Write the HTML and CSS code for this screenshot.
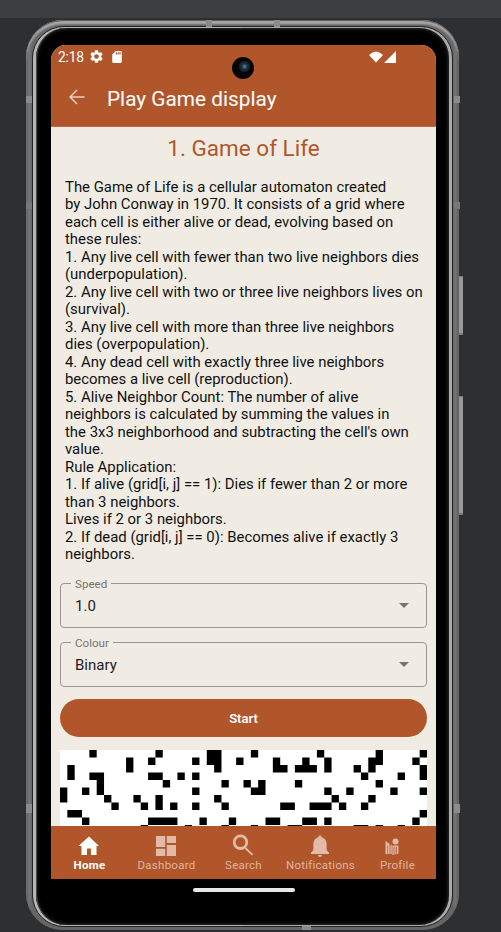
FILE: index.html
```html
<!DOCTYPE html>
<html lang="en">
<head>
<meta charset="utf-8">
<title>Play Game display</title>
<link rel="stylesheet" href="styles.css">
</head>
<body>
<div class="toolbar"></div>
<div class="stage">
  <i class="key key-power"></i><i class="key key-volume"></i>
  <div class="phone">
    <i class="antenna a1"></i><i class="antenna a2"></i><i class="antenna a3"></i><i class="antenna a4"></i>
    <i class="antenna a5"></i><i class="antenna a6"></i><i class="antenna a7"></i>
    <i class="antenna a8"></i><i class="antenna a9"></i>
    <div class="rim"><div class="bezel">
      <div class="screen">
        <header class="header">
          <div class="status">
            <span class="clock">2:18</span>
            <svg class="gear" viewBox="2 2 20 20"><path fill="#fff" d="M19.14 12.94c.04-.3.06-.61.06-.94s-.02-.64-.07-.94l2.03-1.58c.18-.14.23-.41.12-.61l-1.92-3.32c-.12-.22-.37-.29-.59-.22l-2.39.96c-.5-.38-1.03-.7-1.62-.94l-.36-2.54c-.04-.24-.24-.41-.48-.41h-3.84c-.24 0-.43.17-.47.41l-.36 2.54c-.59.24-1.13.57-1.62.94l-2.39-.96c-.22-.08-.47 0-.59.22L2.74 8.87c-.12.21-.08.47.12.61l2.03 1.58c-.05.3-.09.63-.09.94s.02.64.07.94l-2.03 1.58c-.18.14-.23.41-.12.61l1.92 3.32c.12.22.37.29.59.22l2.39-.96c.5.38 1.03.7 1.62.94l.36 2.54c.05.24.24.41.48.41h3.84c.24 0 .44-.17.47-.41l.36-2.54c.59-.24 1.13-.56 1.62-.94l2.39.96c.22.08.47 0 .59-.22l1.92-3.32c.12-.22.07-.47-.12-.61zM12 15.6a3.6 3.6 0 1 1 0-7.2 3.6 3.6 0 0 1 0 7.2z"/></svg>
            <svg class="sdcard" viewBox="4 2 16 20"><path fill="#fff" d="M18 2h-8L4 8v12c0 1.1.9 2 2 2h12c1.100 0 2-.9 2-2V4c0-1.100-.9-2-2-2zm-6 6h-2V4h2zm3 0h-2V4h2zm3 0h-2V4h2z"/></svg>
            <svg class="signal" viewBox="0 0 28 12"><path fill="#fff" d="M0 4Q7-3 14 4L7 11.500zM15 12L27 0v12z"/></svg>
          </div>
          <div class="titlebar">
            <svg class="back" viewBox="0 0 16 16"><path d="M15.500 8H1.500M8 1L1 8l7 7" fill="none" stroke="#edcfc1" stroke-width="1.500"/></svg>
            <h1>Play Game display</h1>
          </div>
        </header>
        <main class="content">
          <h2>1. Game of Life</h2>
          <p class="rules">The Game of Life is a cellular automaton created
by John Conway in 1970. It consists of a grid where
each cell is either alive or dead, evolving based on
these rules:
1. Any live cell with fewer than two live neighbors dies
(underpopulation).
2. Any live cell with two or three live neighbors lives on
(survival).
3. Any live cell with more than three live neighbors
dies (overpopulation).
4. Any dead cell with exactly three live neighbors
becomes a live cell (reproduction).
5. Alive Neighbor Count: The number of alive
neighbors is calculated by summing the values in
the 3x3 neighborhood and subtracting the cell's own
value.
Rule Application:
1. If alive (grid[i, j] == 1): Dies if fewer than 2 or more
than 3 neighbors.
Lives if 2 or 3 neighbors.
2. If dead (grid[i, j] == 0): Becomes alive if exactly 3
neighbors.</p>
          <div class="field"><span class="label">Speed</span><span class="value">1.0</span><i class="caret"></i></div>
          <div class="field"><span class="label">Colour</span><span class="value">Binary</span><i class="caret"></i></div>
          <button class="start">Start</button>
          <svg class="board" viewBox="0 0 50 10.133" preserveAspectRatio="none">
            <path d="M4 0h1v1h-1zM13 0h1v1h-1zM20 0h2v2h-2zM26 0h1v1h-1zM35 0h1v1h-1zM43 0h1v2h-1zM49 0h1v1h-1z
            M9 1h1v2h-1zM12 1h1v1h-1zM18 1h1v1h-1zM24 1h1v1h-1zM29 1h1v2h-1zM33 1h1v1h-1zM36 1h1v2h-1zM42 1h1v2h-1zM48 1h1v1h-1z
            M1 2h1v2h-1zM21 2h1v1h-1zM30 2h1v1h-1zM32 2h3v1h-3zM40 2h1v1h-1zM49 2h1v2h-1z
            M4 3h2v1h-2zM12 3h2v1h-2zM16 3h1v1h-1zM18 3h1v1h-1zM41 3h1v1h-1zM46 3h1v1h-1z
            M5 4h1v2h-1zM14 4h1v1h-1zM22 4h1v1h-1zM25 4h1v1h-1zM27 4h1v2h-1zM32 4h1v1h-1zM43 4h1v1h-1z
            M0 5h1v2h-1zM3 5h1v1h-1zM18 5h1v1h-1zM26 5h1v1h-1zM36 5h1v1h-1zM39 5h1v1h-1zM45 5h1v1h-1zM49 5h1v1h-1z
            M6 6h1v1h-1zM10 6h1v1h-1zM13 6h1v2h-1zM21 6h1v1h-1zM37 6h1v1h-1zM42 6h1v1h-1z
            M7 7h1v1h-1zM11 7h1v1h-1zM15 7h1v1h-1zM18 7h1v1h-1zM22 7h1v1h-1zM30 7h2v1h-2zM34 7h3v1h-3zM38 7h1v1h-1zM41 7h1v1h-1z
            M1 8h2v1h-2zM49 8h1v1h-1z
            M3 9h1v1h-1zM12 9h4v1h-4zM19 9h1v1h-1zM23 9h1v1h-1zM28 9h2v1h-2zM33 9h2v1h-2zM36 9h1v1h-1zM48 9h1v1h-1z
            M11 10h1v1h-1zM17 10h1v1h-1zM22 10h1v1h-1zM26 10h1v1h-1zM31 10h2v1h-2zM40 10h2v1h-2zM43 10h1v1h-1zM46 10h1v1h-1z"/>
          </svg>
        </main>
        <nav class="nav">
          <a class="tab active"><svg viewBox="0 0 24 24"><path d="M10 21v-6.500h4V21h5.500v-9H22L12 2.500 1.500 12H4.500v9z"/></svg><span>Home</span></a>
          <a class="tab"><svg viewBox="0 0 24 24"><path d="M2 2h9.200v11H2zM12.800 2H22v7h-9.200zM2 14.800h9.200V22H2zM12.800 11H22v11h-9.200z"/></svg><span>Dashboard</span></a>
          <a class="tab"><svg viewBox="0 0 24 24"><path d="M15.200 13.500l7 6.800-1.200 1.200-7.200-6.600zM9.500.5a7.700 7.700 0 1 0 0 15.400 7.700 7.700 0 0 0 0-15.400zm0 2.800a4.900 4.900 0 1 1 0 9.800 4.900 4.900 0 0 1 0-9.800z" fill-rule="evenodd"/></svg><span>Search</span></a>
          <a class="tab"><svg viewBox="0 0 24 24"><path d="M12 1.500c-1 0-1.600.7-1.600 1.700C7 4 5.400 7 5.400 10v6L3 18.700V20h18v-1.300L18.600 16v-6c0-3-1.600-6-5-6.800 0-1-.6-1.700-1.600-1.700zM10 21h4c0 1.300-.8 2-2 2s-2-.7-2-2z"/></svg><span>Notifications</span></a>
          <a class="tab"><svg viewBox="0 0 24 24"><circle cx="10.500" cy="7.500" r="3"/><path d="M.5 7l2 1.200V20h-2zM3.100 8.500l1.500 1.700V20H3.100zM5.300 11.500l1.400-1V20H5.300zM7.400 11.500h1.300V21H7.400zM9.500 12h1.300v8.500H9.500zM11.700 11.500h1.700V20h-1.700zM2 9.500h2.500v2H2zM7.400 11.500h6v1.300h-6z"/></svg><span>Profile</span></a>
        </nav>
      </div>
      <div class="pill"></div>
      <div class="camera"></div>
    </div></div>
  </div>
</div>
</body>
</html>
```

FILE: styles.css
```css
* { box-sizing: border-box; }
body { margin: 0; width: 501px; height: 932px; overflow: hidden; background: #2e2f31; font-family: Roboto, sans-serif; }
.toolbar { height: 18px; background: #3c3f41; }
.stage { position: relative; height: 914px; padding: 2px 0 0 26px; }
.phone {
  position: relative; width: 433px; height: 910px; padding: 6px 6px 3px; border-radius: 37px;
  background: linear-gradient(90deg, #555 0, #777 3px, #666 6px, #666 427px, #777 430px, #444 433px);
  box-shadow: inset 0 1px 1px #555, inset 0 4px 2px #aaa, inset 0 -2px 2px #666;
}
.rim { height: 100%; padding: 1px 3px; border: 1px solid #222; border-radius: 32px; background: linear-gradient(90deg, #b5b5b5 50%, #aaa 50%); }
.bezel { position: relative; height: 100%; padding: 17px 15px 0; border-radius: 30px; background: #000; box-shadow: inset 1px 0 0 #444, inset 0 0 4px #444; }
.antenna { position: absolute; width: 6px; height: 7px; background: #8b8b8b; }
.a1 { left: 0; top: 76px; }
.a2 { right: -1px; top: 76px; }
.a3 { left: 180px; top: 0; }
.a4 { left: 0; top: 182px; background: #777; }
.a5 { left: 0; top: 784px; height: 9px; }
.a6 { right: -1px; top: 784px; height: 9px; }
.a7 { left: 248px; top: 0; }
.a8 { left: 276px; bottom: 0; height: 4px; width: 9px; }
.a9 { right: -1px; top: 182px; background: #777; }
.key { position: absolute; width: 4px; left: 459px; background: #999; border: solid #777; border-width: 1px 0 2px; }
.key-power { top: 258px; height: 59px; }
.key-volume { top: 378px; height: 119px; }
.screen { display: flex; flex-direction: column; width: 385px; height: 834px; overflow: hidden; border-radius: 15px 15px 0 0; background: #f0ece4; }
.header { flex: none; height: 82px; background: #b1562b; color: #fff; border-bottom: 1px solid #b96a45; }
.status { display: flex; align-items: center; height: 24px; padding-left: 7px; }
.clock { width: 32px; font-size: 13.8px; letter-spacing: -.2px; }
.gear { width: 13px; height: 13px; margin-top: -1px; }
.sdcard { width: 10px; height: 12px; margin: -1px 0 0 9px; }
.signal { width: 28px; height: 12px; margin: -1px 0 0 247px; }
.titlebar { display: flex; align-items: center; height: 58px; padding: 0 0 0 18px; }
.back { width: 16px; height: 16px; margin-top: -2px; }
h1 { margin: 2px 0 0 22px; font-size: 20.8px; font-weight: 400; }
.content { flex: 1; min-height: 0; padding: 0 9px; overflow: hidden; }
h2 { margin: 0; height: 43px; line-height: 43px; color: #b1562b; font-size: 22.5px; font-weight: 400; text-align: center; }
.rules { margin: 9px 0 0 5px; height: 387px; white-space: pre; color: #111; font-size: 14.9px; line-height: 17.48px; }
.field { position: relative; display: flex; align-items: center; justify-content: space-between; height: 45px; margin: 17px 0 0; padding: 0 17px 0 14px; border: 1px solid #999691; border-radius: 4px; }
.field + .field { margin-top: 14px; }
.label { position: absolute; left: 10px; top: -8px; padding: 0 4px; background: #f0ece4; color: #77736f; font-size: 11.6px; line-height: 16px; }
.value { color: #1d1b1d; font-size: 15px; }
.caret { border: 5px solid transparent; border-top-color: #77736f; border-bottom: 0; }
.start { display: block; width: 100%; height: 38px; margin-top: 12px; padding: 0; border: 0; border-radius: 19px; background: #b1562b; color: #fff; font: 600 13px Roboto, sans-serif; }
.board { display: block; width: 367px; height: 76px; margin-top: 13px; background: #fff; }
.nav { display: grid; grid-template-columns: repeat(5, 1fr); flex: none; height: 53px; background: #b1562b; }
.tab { display: flex; flex-direction: column; align-items: center; padding-top: 8px; color: #dfb5a1; font-size: 11.5px; line-height: 14px; letter-spacing: .25px; }
.tab svg { width: 24px; height: 24px; margin-left: -1px; fill: #e1baa8; }
.tab.active { color: #fff; font-weight: 700; }
.tab.active svg { fill: #fff; }
.pill { width: 102px; height: 4px; margin: 9px 0 0 142px; border-radius: 2px; background: #e8e8e8; }
.camera { position: absolute; left: 196px; top: 29px; width: 22px; height: 22px; border-radius: 50%; background: radial-gradient(circle at 57% 43%, #456b98 0 1px, #172f3c 3px, #192126 5px, #050505 6px); }
```
